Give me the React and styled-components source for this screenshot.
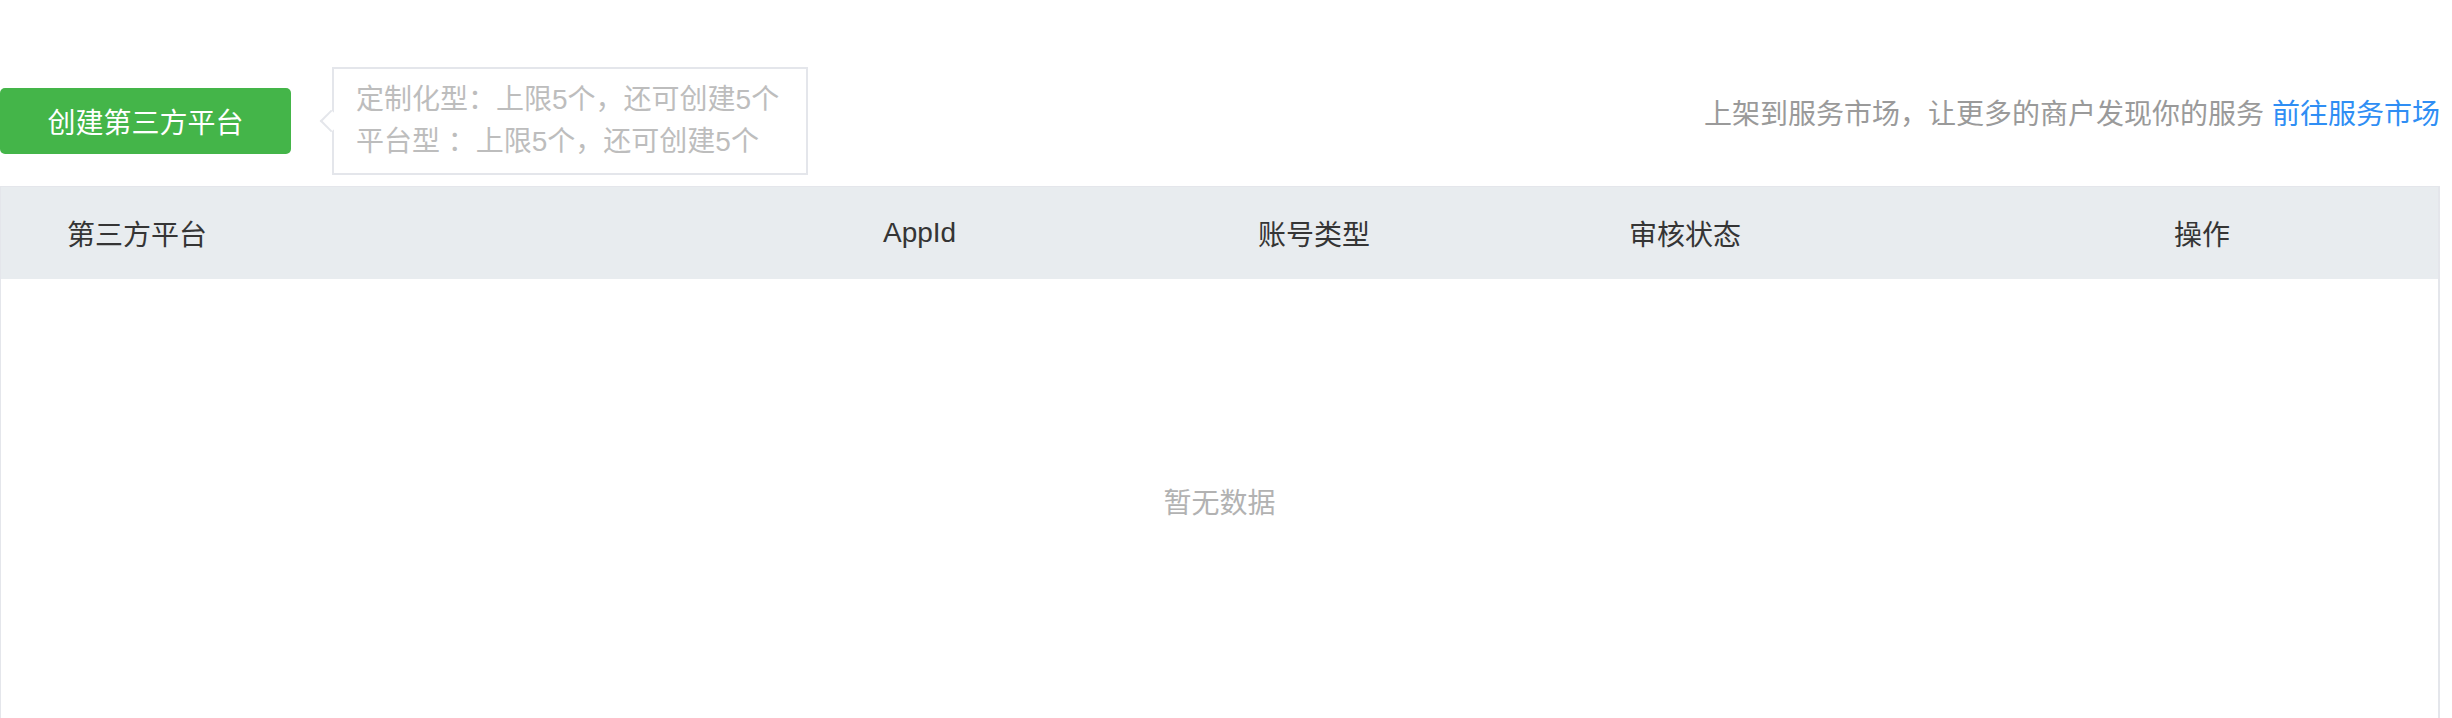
import React from "react";
import styled, { createGlobalStyle } from "styled-components";

const GlobalStyle = createGlobalStyle`
  html, body {
    margin: 0;
    padding: 0;
    background: #fff;
    overflow: hidden;
  }
  body {
    font-family: "Liberation Sans", "Noto Sans CJK SC", sans-serif;
    font-size: 28px;
  }
`;

const Page = styled.div`
  padding: 67px 12px 0 0;
`;

const TopBar = styled.div`
  display: flex;
  align-items: center;
  justify-content: space-between;
  margin-bottom: 11px;
`;

const LeftGroup = styled.div`
  display: flex;
  align-items: center;
  gap: 41px;
`;

const CreateButton = styled.button`
  width: 291px;
  height: 66px;
  border: none;
  border-radius: 5px;
  background: #44b549;
  color: #fff;
  font-family: inherit;
  font-size: 28px;
  cursor: pointer;
  padding: 0;
`;

const Tip = styled.div`
  position: relative;
  width: 476px;
  box-sizing: border-box;
  border: 2px solid #e4e6eb;
  padding: 10px 22px;
  color: #bdbdbd;
  line-height: 42px;
  background: #fff;

  &::before {
    content: "";
    position: absolute;
    left: -11px;
    top: 50%;
    width: 14px;
    height: 14px;
    margin-top: -8px;
    background: #fff;
    border-left: 2px solid #e4e6eb;
    border-bottom: 2px solid #e4e6eb;
    transform: rotate(45deg);
  }
`;

const Notice = styled.div`
  align-self: flex-start;
  margin-top: 27px;
  line-height: 42px;
  color: #9a9a9a;
  white-space: nowrap;
`;

const MarketLink = styled.a`
  color: #2f8ef4;
  text-decoration: none;
  margin-left: 8px;
`;

const Table = styled.div`
  border: 1px solid #e4e6eb;
  border-right-width: 2px;
`;

const columns = "882px 375px 371px 545px 1fr";

const HeaderRow = styled.div`
  display: grid;
  grid-template-columns: ${columns};
  height: 92px;
  align-items: center;
  background: #e8ecef;
  color: #353535;
`;

const HeadCell = styled.div`
  padding-left: ${(p) => p.$pad || 0}px;
  white-space: nowrap;
`;

const EmptyBody = styled.div`
  height: 444px;
  display: flex;
  align-items: center;
  justify-content: center;
  color: #b2b2b2;
`;

const heads = [
  { label: "第三方平台", pad: 66 },
  { label: "AppId" },
  { label: "账号类型" },
  { label: "审核状态" },
  { label: "操作" },
];

export default function App() {
  return (
    <>
      <GlobalStyle />
      <Page>
        <TopBar>
          <LeftGroup>
            <CreateButton>创建第三方平台</CreateButton>
            <Tip>
              <div>定制化型：上限5个，还可创建5个</div>
              <div>平台型 ：上限5个，还可创建5个</div>
            </Tip>
          </LeftGroup>
          <Notice>
            上架到服务市场，让更多的商户发现你的服务
            <MarketLink href="#">前往服务市场</MarketLink>
          </Notice>
        </TopBar>
        <Table>
          <HeaderRow>
            {heads.map((h) => (
              <HeadCell key={h.label} $pad={h.pad}>
                {h.label}
              </HeadCell>
            ))}
          </HeaderRow>
          <EmptyBody>暂无数据</EmptyBody>
        </Table>
      </Page>
    </>
  );
}
